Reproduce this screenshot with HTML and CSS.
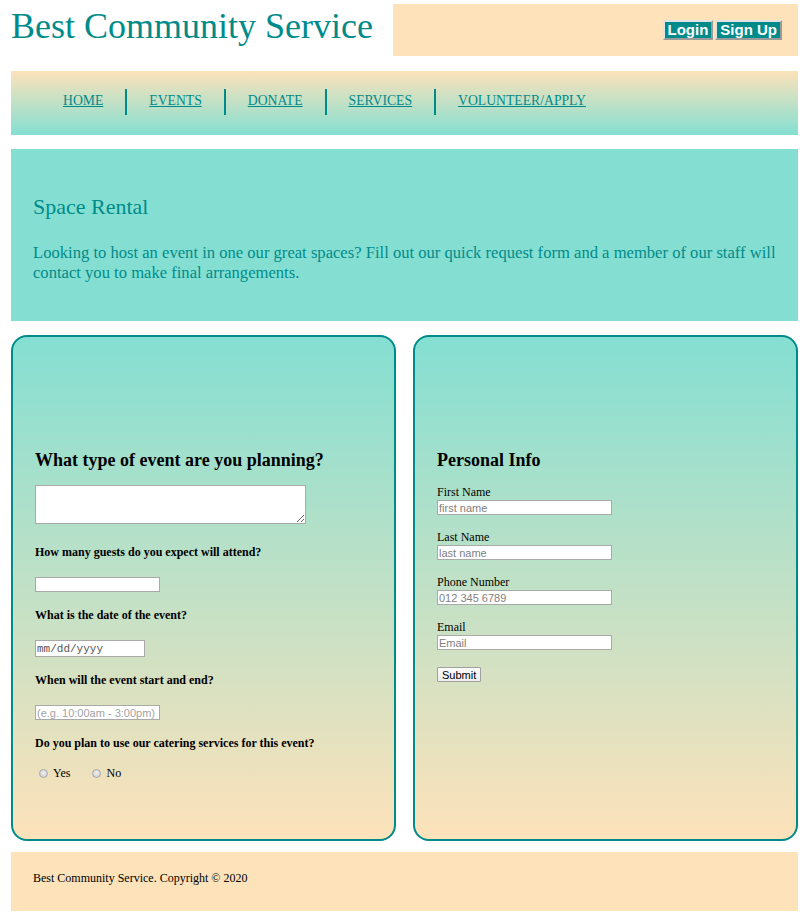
FILE: index.html
```html
<!DOCTYPE html>
<html lang="en">
<head>
<meta charset="utf-8">
<title>Space Rental - Best Community Service</title>
<link rel="stylesheet" href="styles.css">
</head>
<body>
<div class="page">
  <header class="site-header">
    <h1 class="site-title">Best Community Service</h1>
    <div class="account-box">
      <button class="account-btn" type="button">Login</button>
      <button class="account-btn" type="button">Sign Up</button>
    </div>
  </header>

  <nav class="main-nav">
    <ul class="nav-list">
      <li class="nav-item"><a href="#">HOME</a></li>
      <li class="nav-item"><a href="#">EVENTS</a></li>
      <li class="nav-item"><a href="#">DONATE</a></li>
      <li class="nav-item"><a href="#">SERVICES</a></li>
      <li class="nav-item"><a href="#">VOLUNTEER/APPLY</a></li>
    </ul>
  </nav>

  <section class="hero">
    <h2 class="hero-title">Space Rental</h2>
    <p class="hero-text">Looking to host an event in one our great spaces? Fill out our quick request form and a member of our staff will contact you to make final arrangements.</p>
  </section>

  <div class="cards">
    <form class="card event-card">
      <h3 class="card-title">What type of event are you planning?</h3>
      <textarea class="event-type"></textarea>
      <label class="q-label q-first">How many guests do you expect will attend?</label>
      <input class="q-input guests" type="text">
      <label class="q-label">What is the date of the event?</label>
      <input class="q-input date" type="text" placeholder="mm/dd/yyyy">
      <label class="q-label">When will the event start and end?</label>
      <input class="q-input time" type="text" placeholder="(e.g. 10:00am - 3:00pm)">
      <label class="q-label">Do you plan to use our catering services for this event?</label>
      <div class="radio-row">
        <input class="radio" type="radio" name="catering" id="cat-yes"><label for="cat-yes" class="radio-label">Yes</label>
        <input class="radio radio-no" type="radio" name="catering" id="cat-no"><label for="cat-no" class="radio-label">No</label>
      </div>
    </form>

    <form class="card info-card">
      <h3 class="card-title">Personal Info</h3>
      <div class="field">
        <label class="f-label">First Name</label>
        <input class="f-input" type="text" placeholder="first name">
      </div>
      <div class="field">
        <label class="f-label">Last Name</label>
        <input class="f-input" type="text" placeholder="last name">
      </div>
      <div class="field">
        <label class="f-label">Phone Number</label>
        <input class="f-input" type="text" placeholder="012 345 6789">
      </div>
      <div class="field">
        <label class="f-label">Email</label>
        <input class="f-input" type="text" placeholder="Email">
      </div>
      <button class="submit-btn" type="button">Submit</button>
    </form>
  </div>

  <footer class="site-footer">Best Community Service. Copyright © 2020</footer>
</div>
</body>
</html>
```

FILE: styles.css
```css
* { box-sizing: border-box; }

html, body {
  margin: 0;
  padding: 0;
  background: #ffffff;
}

body {
  font-family: "Liberation Serif", "Times New Roman", serif;
  color: #000;
}

.page {
  padding: 4px 11px 11px;
}

/* Header */
.site-header {
  display: flex;
  align-items: flex-start;
  gap: 20px;
}

.site-title {
  margin: 2px 0 0;
  font-size: 36px;
  line-height: 40px;
  font-weight: normal;
  color: #008b8b;
  white-space: nowrap;
}

.account-box {
  flex: 1;
  height: 52px;
  background: #fde2ba;
  display: flex;
  align-items: center;
  justify-content: flex-end;
  gap: 2px;
  padding-right: 16px;
}

.account-btn {
  font-family: "Liberation Sans", Arial, sans-serif;
  font-weight: bold;
  font-size: 15px;
  line-height: 16px;
  color: #fff;
  background: #008b8b;
  border: 2px solid;
  border-color: #e2e2e2 #9a9a9a #9a9a9a #e2e2e2;
  padding: 0 3px;
  margin: 0;
  border-radius: 0;
}

/* Nav */
.main-nav {
  margin-top: 15px;
  height: 64px;
  padding: 18px 0 20px 30px;
  background: linear-gradient(to bottom, #fde2ba, #84dfd2);
}

.nav-list {
  list-style: none;
  margin: 0;
  padding: 0;
  display: flex;
}

.nav-item {
  height: 26px;
  line-height: 24px;
  padding: 0 22px;
  font-size: 13.7px;
}

.nav-item + .nav-item {
  border-left: 2px solid #008b8b;
}

.nav-item a {
  color: #008b8b;
  text-decoration: underline;
}

/* Hero */
.hero {
  margin-top: 14px;
  height: 172px;
  background: #84dfd2;
  padding: 22px 12px 0 22px;
  color: #008b8b;
}

.hero-title {
  margin: 23px 0 0;
  font-size: 22px;
  font-weight: normal;
  line-height: 25px;
}

.hero-text {
  margin: 24px 0 0;
  font-size: 16.6px;
  line-height: 20px;
}

/* Cards */
.cards {
  margin-top: 14px;
  display: grid;
  grid-template-columns: 1fr 1fr;
  gap: 17px;
}

.card {
  height: 506px;
  border: 2px solid #008b8b;
  border-radius: 16px;
  background: linear-gradient(to bottom, #84dfd2, #fde2ba);
  padding: 113px 22px 0;
  margin: 0;
  display: flex;
  flex-direction: column;
  align-items: flex-start;
}

.card-title {
  margin: 0;
  font-size: 18px;
  line-height: 21px;
  font-weight: bold;
}

.event-type {
  margin: 14px 0 0;
  width: 271px;
  height: 39px;
  border: 1px solid #a9a9a9;
  background: #fff;
  padding: 2px;
}

.q-label {
  display: block;
  margin-top: 16px;
  font-size: 12px;
  line-height: 14px;
  font-weight: bold;
}

.q-label.q-first {
  margin-top: 21px;
}

.q-input {
  display: block;
  margin: 18px 0 0;
  height: 15px;
  width: 125px;
  border: 1px solid #a9a9a9;
  background: #fff;
  padding: 0 1px;
  font-family: "Liberation Sans", Arial, sans-serif;
  font-size: 11px;
}

.q-input.date {
  width: 110px;
  height: 17px;
  font-family: "Liberation Mono", "Courier New", monospace;
}

.q-input.date::placeholder {
  color: #555;
}

.q-input.time::placeholder {
  color: #a3a3a3;
}

.radio-row {
  margin-top: 16px;
  display: flex;
  align-items: center;
  height: 14px;
  font-size: 12px;
  line-height: 14px;
}

.radio {
  appearance: none;
  -webkit-appearance: none;
  width: 9px;
  height: 9px;
  margin: 0 5px 0 4px;
  border: 1px solid #a8a8a8;
  border-radius: 50%;
  background: radial-gradient(circle at 50% 40%, #f0f0f0, #c9c9c9);
}

.radio.radio-no {
  margin-left: 22px;
}

/* Personal info */
.info-card .card-title {
  margin-bottom: 14px;
}

.field {
  margin-bottom: 15px;
}

.f-label {
  display: block;
  font-size: 12px;
  line-height: 14px;
}

.f-input {
  display: block;
  margin-top: 1px;
  width: 175px;
  height: 15px;
  border: 1px solid #a9a9a9;
  background: #fff;
  padding: 0 1px;
  font-family: "Liberation Sans", Arial, sans-serif;
  font-size: 11px;
}

.f-input::placeholder {
  color: #808080;
}

.submit-btn {
  margin-top: 2px;
  height: 15px;
  padding: 0 4px;
  font-family: "Liberation Sans", Arial, sans-serif;
  font-size: 11px;
  line-height: 12px;
  color: #000;
  background: linear-gradient(to bottom, #fbfbfb, #ececec);
  border: 1px solid #a0a0a0;
  border-radius: 1px;
}

/* Footer */
.site-footer {
  margin-top: 11px;
  height: 59px;
  background: #fde2ba;
  padding: 19px 22px 0;
  font-size: 12px;
  line-height: 14px;
}
```
